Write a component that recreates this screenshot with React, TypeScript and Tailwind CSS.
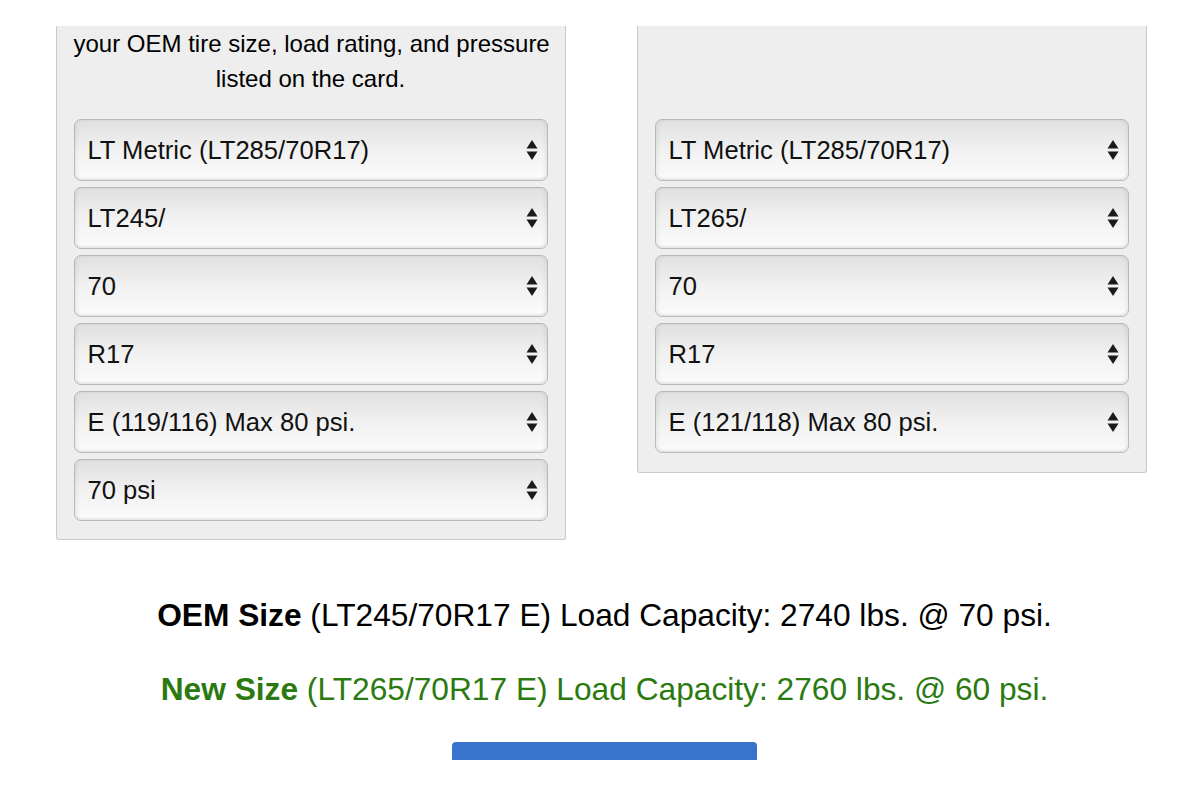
const font = { fontFamily: '"Liberation Sans", Arial, Helvetica, sans-serif' };

type Sel = { value: string };

const SelectArrows = () => (
  <svg width="12" height="24" viewBox="0 0 12 24" className="shrink-0">
    <path d="M0.5 10.5 L6 2 L11.5 10.5 Z" fill="#1a1a1a" />
    <path d="M0.5 13.5 L11.5 13.5 L6 22 Z" fill="#1a1a1a" />
  </svg>
);

const FakeSelect = ({ value }: Sel) => (
  <div className="h-[62px] rounded-[7px] border border-[#b8b8b8] bg-gradient-to-b from-[#e0e0e0] via-[#f1f1f1] to-[#fbfbfb] shadow-[inset_0_-2px_2px_rgba(0,0,0,0.06),inset_3px_0_3px_rgba(0,0,0,0.04),inset_-3px_0_3px_rgba(0,0,0,0.04)] flex items-center justify-between pl-[13px] pr-[9px]">
    <span className="text-[25.6px] text-[#111] whitespace-nowrap">{value}</span>
    <SelectArrows />
  </div>
);

const oemSelects = [
  "LT Metric (LT285/70R17)",
  "LT245/",
  "70",
  "R17",
  "E (119/116) Max 80 psi.",
  "70 psi",
];

const newSelects = [
  "LT Metric (LT285/70R17)",
  "LT265/",
  "70",
  "R17",
  "E (121/118) Max 80 psi.",
];

export default function App() {
  return (
    <div className="min-h-screen bg-white text-black" style={font}>
      <div className="flex justify-center items-start gap-[71px] pt-[26px]">
        {/* OEM panel */}
        <div className="w-[510px] bg-[#eeeeee] border-x border-b border-[#c9c9c9] rounded-b-[3px] px-[17px] pb-[18px]">
          <p className="text-center text-[24px] leading-[35px] whitespace-nowrap">
            your OEM tire size, load rating, and pressure
            <br />
            listed on the card.
          </p>
          <div className="mt-[23px] flex flex-col gap-[6px]">
            {oemSelects.map((s, i) => (
              <FakeSelect key={i} value={s} />
            ))}
          </div>
        </div>

        {/* New size panel */}
        <div className="w-[510px] bg-[#eeeeee] border-x border-b border-[#c9c9c9] rounded-b-[3px] px-[17px] pb-[19px]">
          <div className="h-[93px]" />
          <div className="flex flex-col gap-[6px]">
            {newSelects.map((s, i) => (
              <FakeSelect key={i} value={s} />
            ))}
          </div>
        </div>
      </div>

      <div className="mt-[57px] pl-[7px] text-center text-[31.7px] leading-[36px]">
        <p>
          <b>OEM Size</b> (LT245/70R17 E) Load Capacity: 2740 lbs. @ 70 psi.
        </p>
        <p className="mt-[38px] text-[#2a7a10]">
          <b>New Size</b> (LT265/70R17 E) Load Capacity: 2760 lbs. @ 60 psi.
        </p>
      </div>

      <div className="mt-[35px] flex justify-center pl-[7px]">
        <div className="w-[305px] h-[18px] bg-[#3874cd] rounded-t-[4px]" />
      </div>
    </div>
  );
}
